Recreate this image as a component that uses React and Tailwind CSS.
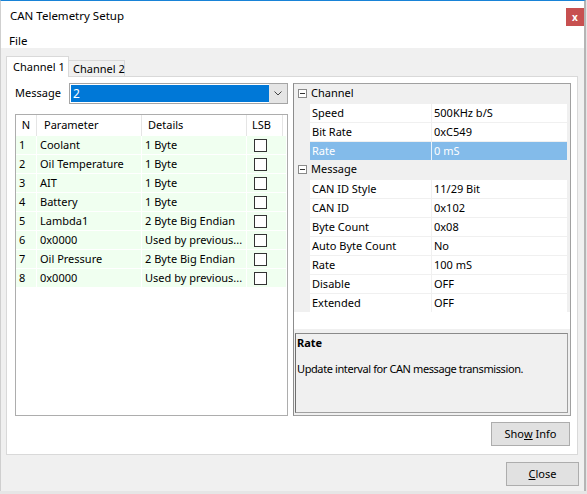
import React from "react";

const ROWS = [
  { n: 1, name: "Coolant", details: "1 Byte" },
  { n: 2, name: "Oil Temperature", details: "1 Byte" },
  { n: 3, name: "AIT", details: "1 Byte" },
  { n: 4, name: "Battery", details: "1 Byte" },
  { n: 5, name: "Lambda1", details: "2 Byte Big Endian" },
  { n: 6, name: "0x0000", details: "Used by previous..." },
  { n: 7, name: "Oil Pressure", details: "2 Byte Big Endian" },
  { n: 8, name: "0x0000", details: "Used by previous..." },
];

const PROPS = [
  { category: "Channel" },
  { label: "Speed", value: "500KHz b/S" },
  { label: "Bit Rate", value: "0xC549" },
  { label: "Rate", value: "0 mS", selected: true },
  { category: "Message" },
  { label: "CAN ID Style", value: "11/29 Bit" },
  { label: "CAN ID", value: "0x102" },
  { label: "Byte Count", value: "0x08" },
  { label: "Auto Byte Count", value: "No" },
  { label: "Rate", value: "100 mS" },
  { label: "Disable", value: "OFF" },
  { label: "Extended", value: "OFF" },
];

function MinusBox() {
  return (
    <svg width="9" height="9" viewBox="0 0 9 9" className="shrink-0">
      <rect x="0.5" y="0.5" width="8" height="8" fill="#fff" stroke="#8a8a8a" />
      <line x1="2" y1="4.5" x2="7" y2="4.5" stroke="#333" />
    </svg>
  );
}

function ParamList() {
  return (
    <div className="mt-[10px] h-[302px] border border-[#adadad] bg-white">
      {/* header */}
      <div className="flex h-[21px] bg-white">
        <div className="w-[21px] flex items-center justify-center border-r border-[#e5e5e5]">N</div>
        <div className="w-[105px] flex items-center pl-[7px] border-r border-[#e5e5e5]">Parameter</div>
        <div className="w-[105px] flex items-center pl-[6px] border-r border-[#e5e5e5]">Details</div>
        <div className="w-[36px] flex items-center pl-[5px] border-r border-[#e5e5e5]">LSB</div>
      </div>
      {ROWS.map((r) => (
        <div key={r.n} className="flex h-[19px] border-b border-white">
          <div className="w-[21px] bg-[#f0fff0] border-r border-white flex items-center pl-[3px]">{r.n}</div>
          <div className="w-[105px] bg-[#f0fff0] border-r border-white flex items-center pl-[3px] whitespace-nowrap">{r.name}</div>
          <div className="w-[105px] bg-[#f0fff0] border-r border-white flex items-center pl-[3px] whitespace-nowrap overflow-hidden">{r.details}</div>
          <div className="w-[39px] bg-[#f0fff0] flex items-center pl-[7px]">
            <div className="w-[13px] h-[13px] border border-[#333] bg-white" />
          </div>
        </div>
      ))}
    </div>
  );
}

function PropertyGrid() {
  return (
    <div className="w-[278px] h-[333px] border border-[#a0a0a0] border-l-[#8c8c8c] flex flex-col bg-white">
      <div className="bg-[#f0f0f0]">
        {PROPS.map((p, i) =>
          p.category ? (
            <div key={i} className="h-[19px] flex items-center pl-[4px] bg-[#f0f0f0]">
              <MinusBox />
              <span className="ml-[4px]">{p.category}</span>
            </div>
          ) : (
            <div key={i} className="h-[19px] flex border-t border-[#f0f0f0]">
              <div className="w-[16px] bg-[#f0f0f0]" />
              <div
                className={`w-[122px] flex items-center pl-[2px] border-r whitespace-nowrap ${
                  p.selected ? "bg-[#83bbea] text-white border-[#e8f2fb]" : "bg-white border-[#f0f0f0]"
                }`}
              >
                {p.label}
              </div>
              <div
                className={`w-[135px] flex items-center pl-[2px] whitespace-nowrap ${
                  p.selected ? "bg-[#83bbea] text-white" : "bg-white"
                }`}
              >
                {p.value}
              </div>
              <div className="w-[3px] bg-[#f0f0f0]" />
            </div>
          )
        )}
      </div>
      <div className="h-[17px] bg-white" />
      <div className="flex-1 bg-[#f0f0f0] pt-[4px] pl-[1px] pr-[2px] pb-[2px] flex">
        <div className="flex-1 border border-[#a0a0a0] border-l-[#6f6f6f] border-t-[#8a8a8a] pl-[1px] pt-[1px]">
          <div className="font-bold leading-[15px]">Rate</div>
          <div className="mt-[11px] leading-[15px] tracking-[-0.4px]">Update interval for CAN message transmission.</div>
        </div>
      </div>
    </div>
  );
}

export default function App() {
  return (
    <div className="w-[587px] h-[494px] bg-[#e6e6e6] overflow-hidden font-['Noto_Sans',sans-serif] text-[11px] text-black">
      <div className="w-[586px] h-[491px] flex flex-col border-t border-t-[#1883d7] border-l border-l-[#cfcfcf] border-r-2 border-r-[#b5b5b5] bg-[#f0f0f0]">
        {/* title bar */}
        <div className="h-[30px] bg-white flex items-center pl-[9px]">
          <span className="text-[11.5px]">CAN Telemetry Setup</span>
          <div className="ml-auto mt-[2px] w-[18px] h-[18px] bg-[#c75050] flex items-center justify-center text-white font-bold text-[10px] leading-none pb-[1px]">
            x
          </div>
        </div>
        {/* menu */}
        <div className="h-[17px] bg-white flex items-center pt-[3px] pl-[8px] text-[11.5px]">File</div>

        {/* body */}
        <div className="flex-1 px-[5px] pt-[8px] flex flex-col">
          {/* tabs */}
          <div className="flex items-end h-[21px] -mb-px">
            <div className="relative z-10 w-[63px] h-[21px] bg-white border border-b-0 border-[#d9d9d9] flex items-center pl-[6px] whitespace-nowrap">
              Channel 1
            </div>
            <div className="w-[56px] h-[17px] bg-[#f0f0f0] border-t border-r border-[#d9d9d9] flex items-center pl-[4px] whitespace-nowrap">
              Channel 2
            </div>
          </div>

          {/* tab page */}
          <div className="w-[572px] h-[379px] bg-white border border-[#d9d9d9] pt-[6px] pl-[8px] pr-[6px] flex flex-col">
            <div className="flex gap-[5px] h-[333px]">
              <div className="w-[273px] flex flex-col">
                <div className="flex items-center h-[21px]">
                  <span className="w-[54px]">Message</span>
                  <div className="w-[219px] h-[21px] border border-[#a5a5a5] bg-white flex">
                    <div className="flex-1 ml-[1px] my-[1px] bg-[#0078d7] text-white text-[12px] flex items-center pl-[2px]">
                      2
                    </div>
                    <div className="w-[18px] bg-[#e5e5e5] flex items-center justify-center">
                      <svg width="8" height="5" viewBox="0 0 8 5">
                        <polyline points="0.5,0.5 4,4 7.5,0.5" fill="none" stroke="#444" />
                      </svg>
                    </div>
                  </div>
                </div>
                <ParamList />
              </div>
              <PropertyGrid />
            </div>
            <div className="mt-[6px] flex justify-end">
              <button className="mr-[1px] w-[79px] h-[24px] border border-[#adadad] bg-[#e1e1e1] flex items-center justify-center">
                Sho<span className="underline">w</span>&nbsp;Info
              </button>
            </div>
          </div>

          {/* footer */}
          <div className="mt-[7px] flex justify-end">
            <button className="w-[73px] h-[24px] border border-[#adadad] bg-[#e1e1e1] flex items-center justify-center">
              <span className="underline">C</span>lose
            </button>
          </div>
        </div>
      </div>
    </div>
  );
}
